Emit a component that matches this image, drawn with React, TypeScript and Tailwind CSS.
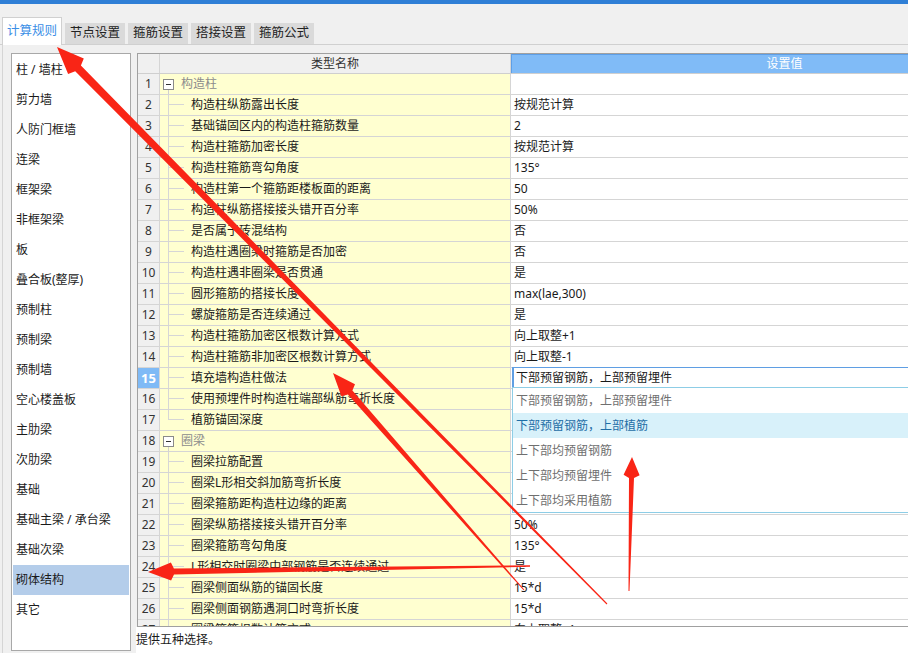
import React from "react";

type Row = { name: string; value?: string; group?: boolean; last?: boolean };

const rows: Row[] = [
  { name: "构造柱", group: true },
  { name: "构造柱纵筋露出长度", value: "按规范计算" },
  { name: "基础锚固区内的构造柱箍筋数量", value: "2" },
  { name: "构造柱箍筋加密长度", value: "按规范计算" },
  { name: "构造柱箍筋弯勾角度", value: "135°" },
  { name: "构造柱第一个箍筋距楼板面的距离", value: "50" },
  { name: "构造柱纵筋搭接接头错开百分率", value: "50%" },
  { name: "是否属于砖混结构", value: "否" },
  { name: "构造柱遇圈梁时箍筋是否加密", value: "否" },
  { name: "构造柱遇非圈梁是否贯通", value: "是" },
  { name: "圆形箍筋的搭接长度", value: "max(lae,300)" },
  { name: "螺旋箍筋是否连续通过", value: "是" },
  { name: "构造柱箍筋加密区根数计算方式", value: "向上取整+1" },
  { name: "构造柱箍筋非加密区根数计算方式", value: "向上取整-1" },
  { name: "填充墙构造柱做法", value: "下部预留钢筋，上部预留埋件" },
  { name: "使用预埋件时构造柱端部纵筋弯折长度", value: "" },
  { name: "植筋锚固深度", value: "", last: true },
  { name: "圈梁", group: true },
  { name: "圈梁拉筋配置", value: "" },
  { name: "圈梁L形相交斜加筋弯折长度", value: "" },
  { name: "圈梁箍筋距构造柱边缘的距离", value: "" },
  { name: "圈梁纵筋搭接接头错开百分率", value: "50%" },
  { name: "圈梁箍筋弯勾角度", value: "135°" },
  { name: "L形相交时圈梁中部钢筋是否连续通过", value: "是" },
  { name: "圈梁侧面纵筋的锚固长度", value: "15*d" },
  { name: "圈梁侧面钢筋遇洞口时弯折长度", value: "15*d" },
  { name: "圈梁箍筋根数计算方式", value: "向上取整+1" },
];

const leftItems = [
  "柱 / 墙柱",
  "剪力墙",
  "人防门框墙",
  "连梁",
  "框架梁",
  "非框架梁",
  "板",
  "叠合板(整厚)",
  "预制柱",
  "预制梁",
  "预制墙",
  "空心楼盖板",
  "主肋梁",
  "次肋梁",
  "基础",
  "基础主梁 / 承台梁",
  "基础次梁",
  "砌体结构",
  "其它",
];

const options = [
  "下部预留钢筋，上部预留埋件",
  "下部预留钢筋，上部植筋",
  "上下部均预留钢筋",
  "上下部均预留埋件",
  "上下部均采用植筋",
];

function arrowPoints(
  x1: number,
  y1: number,
  x2: number,
  y2: number,
  hl: number,
  hw: number,
  sw: number,
  tw: number
) {
  const dx = x2 - x1;
  const dy = y2 - y1;
  const L = Math.sqrt(dx * dx + dy * dy);
  const ux = dx / L;
  const uy = dy / L;
  const nx = -uy;
  const ny = ux;
  const bx = x2 - ux * hl;
  const by = y2 - uy * hl;
  const pts = [
    [x1 + (nx * tw) / 2, y1 + (ny * tw) / 2],
    [bx + (nx * sw) / 2, by + (ny * sw) / 2],
    [bx + nx * hw + ux * 3, by + ny * hw + uy * 3],
    [x2, y2],
    [bx - nx * hw + ux * 3, by - ny * hw + uy * 3],
    [bx - (nx * sw) / 2, by - (ny * sw) / 2],
    [x1 - (nx * tw) / 2, y1 - (ny * tw) / 2],
  ];
  return pts.map((p) => `${p[0].toFixed(1)},${p[1].toFixed(1)}`).join(" ");
}

function NameCell({ r }: { r: Row }) {
  if (r.group) {
    return (
      <div className="w-[351px] h-full shrink-0 border-r border-[#d5d5d5] bg-[#ffffd0] flex items-center">
        <div className="ml-[3px] w-[11px] h-full flex flex-col items-center">
          <div className="flex-1" />
          <div className="w-[11px] h-[11px] border border-[#8a8a8a] bg-white flex items-center justify-center">
            <div className="w-[5px] h-px bg-[#333]" />
          </div>
          <div className="flex-1 w-px bg-[#d0d0d0]" />
        </div>
        <span className="ml-[7px] text-[#8c8c8c]">{r.name}</span>
      </div>
    );
  }
  return (
    <div className="w-[351px] h-full shrink-0 border-r border-[#d5d5d5] bg-[#ffffd0] flex items-center">
      <div className="ml-[8px] w-[16px] h-full flex flex-col">
        <div className="h-[10px] border-l border-b border-[#d6d6d6]" />
        <div className={r.last ? "flex-1" : "flex-1 border-l border-[#d6d6d6]"} />
      </div>
      <span className="ml-[7px] whitespace-nowrap">{r.name}</span>
    </div>
  );
}

export default function App() {
  return (
    <div className="relative w-[908px] h-[653px] overflow-hidden bg-[#f0f0f0] text-[12px] text-[#1a1a1a] font-['Noto_Sans','Noto_Sans_CJK_SC',sans-serif] leading-none">
      <div className="h-[4px] bg-[#2f7fd6]" />
      {/* tabs */}
      <div className="h-[41px] flex items-end pl-[2px] gap-[3px] border-b border-[#d0d0d0]">
        <div className="w-[60px] h-[28px] -mb-px bg-white border border-b-0 border-[#d0d0d0] flex items-center justify-center text-[#3a8ee6] text-[12.5px]">
          计算规则
        </div>
        {["节点设置", "箍筋设置", "搭接设置", "箍筋公式"].map((t) => (
          <div
            key={t}
            className="w-[60px] h-[21px] bg-[#dadada] flex items-center justify-center text-[12.5px] text-[#222]"
          >
            {t}
          </div>
        ))}
      </div>
      {/* content */}
      <div className="ml-[2px] border-l border-[#d5d5d5] h-[608px] flex pl-[8px] pt-[8px] gap-[6px]">
        <div className="w-[120px] h-[598px] shrink-0 border border-[#a8a8a8] bg-white p-px">
          {leftItems.map((t) => (
            <div
              key={t}
              className={
                "h-[30px] flex items-center pl-[3px] whitespace-nowrap " +
                (t === "砌体结构" ? "bg-[#b4cdea]" : "")
              }
            >
              {t}
            </div>
          ))}
        </div>
        <div className="flex flex-col w-[772px] shrink-0">
          <div className="w-[772px] h-[574px] border-l border-t border-b border-[#a0a0a0] bg-white overflow-hidden">
            <div className="w-[919px]">
              {/* header */}
              <div className="h-[20px] flex border-b border-[#cfcfcf]">
                <div className="w-[22px] shrink-0 border-r border-[#d5d5d5] bg-[#f0f0f0]" />
                <div className="w-[351px] shrink-0 border-r border-[#d5d5d5] bg-[#f0f0f0] flex items-center justify-center text-[#333]">
                  类型名称
                </div>
                <div className="w-[546px] shrink-0 bg-[#80bbf7] border-t border-l border-[#5d9fe8] flex items-center justify-center text-white">
                  设置值
                </div>
              </div>
              {rows.map((r, i) => {
                const n = i + 1;
                const active = n === 15;
                return (
                  <div key={n} className="h-[21px] flex border-b border-[#d5d5d5]">
                    <div
                      className={
                        "w-[22px] shrink-0 h-full border-r border-[#d5d5d5] flex items-center justify-center " +
                        (active ? "bg-[#7fbaf6] text-white font-bold text-[13px]" : "bg-[#f0f0f0] text-[#333]")
                      }
                    >
                      {n}
                    </div>
                    <NameCell r={r} />
                    <div className="w-[546px] shrink-0 h-full relative bg-white">
                      {active ? (
                        <>
                          <div className="absolute left-[1px] -top-px w-[560px] h-[21px] border-t border-l-2 border-[#5f9ee3] flex items-center pl-[2px] bg-white">
                            {r.value}
                          </div>
                          <div className="absolute left-[1px] top-[19px] w-[560px] h-[126px] bg-white border border-[#8dcde6] z-10">
                            {options.map((o, k) => (
                              <div
                                key={o}
                                className={
                                  "h-[25px] flex items-center pl-[3px] " +
                                  (k === 1 ? "bg-[#d8f1fa] text-[#1f6ea6]" : "text-[#6f6f6f]")
                                }
                              >
                                {o}
                              </div>
                            ))}
                          </div>
                        </>
                      ) : (
                        <div className="h-full flex items-center pl-[3px]">{r.value}</div>
                      )}
                    </div>
                  </div>
                );
              })}
            </div>
          </div>
          <div className="h-[26px] bg-white flex items-center text-[#1a1a1a] -ml-px">提供五种选择。</div>
        </div>
      </div>
      {/* annotation arrows */}
      <svg className="absolute inset-0 pointer-events-none z-20" width="908" height="653" viewBox="0 0 908 653">
        <polygon fill="#f92516" points={arrowPoints(607, 604, 57, 47, 30, 11, 8, 1)} />
        <polygon fill="#f92516" points={arrowPoints(524, 590, 333, 373, 26, 9, 6, 1)} />
        <polygon fill="#f92516" points={arrowPoints(629, 591, 632, 457, 21, 8, 5, 1)} />
        <polygon fill="#f92516" points={arrowPoints(530, 566, 148, 572, 26, 9, 6, 1.5)} />
      </svg>
    </div>
  );
}
